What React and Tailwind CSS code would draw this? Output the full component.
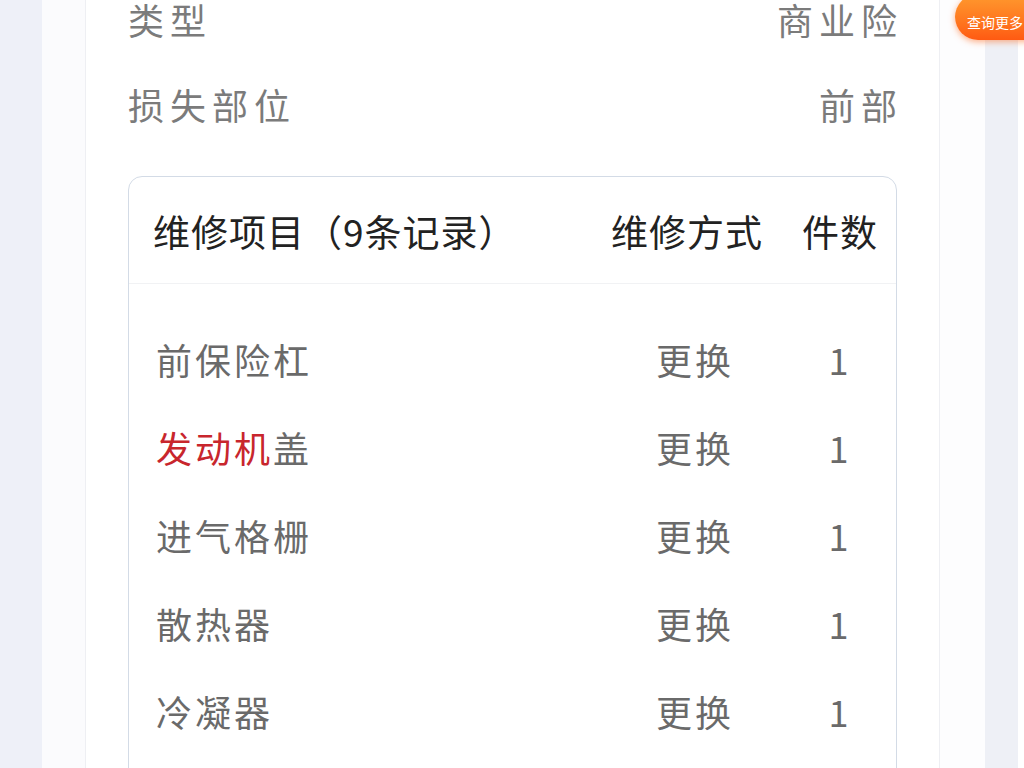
const rows = [
    { name: '前保险杠', way: '更换', count: 1 },
    { name: '发动机盖', red: 3, way: '更换', count: 1 },
    { name: '进气格栅', way: '更换', count: 1 },
    { name: '散热器', way: '更换', count: 1 },
    { name: '冷凝器', way: '更换', count: 1 },
    { name: '左前大灯总成', way: '更换', count: 1 },
    { name: '右前大灯总成', way: '更换', count: 1 },
];

const font = { fontFamily: '"Noto Sans CJK SC", "Noto Sans", sans-serif' };

function InfoRow({ label, value }) {
    return (
        <div className="h-[85px] flex items-center justify-between text-[36px] text-[#7b7b7b] tracking-[6px]">
            <span>{label}</span>
            <span className="-mr-[6px]">{value}</span>
        </div>
    );
}

export default function App() {
    return (
        <div style={font} className="relative h-[768px] w-[1024px] overflow-hidden flex bg-white">
            <div className="w-[42px] bg-[#eef0f8]" />
            <div className="w-[43px] bg-[#fbfbfd]" />

            <div className="w-[855px] bg-white border-l border-r border-[#eeeff3] px-[42px]">
                <div className="-mt-[24px]">
                    <InfoRow label="类型" value="商业险" />
                    <InfoRow label="损失部位" value="前部" />
                </div>

                <div className="mt-[30px] border border-[#d3dbe6] rounded-[14px] bg-white">
                    <div className="h-[107px] flex items-center pt-[4px] text-[37px] text-[#222] tracking-[1px] border-b border-[#f1f2f4] whitespace-nowrap">
                        <div className="flex-1 pl-[24px]">维修项目（9条记录）</div>
                        <div className="w-[150px] mr-[28px] flex justify-center">维修方式</div>
                        <div className="w-[100px] mr-[6px] flex justify-center">件数</div>
                    </div>
                    <div className="pt-[31px]">
                        {rows.map((r, i) => (
                            <div key={i} className="h-[88px] flex items-center text-[36px] text-[#6a6a6a] tracking-[3px] whitespace-nowrap">
                                <div className="flex-1 pl-[27px]">
                                    {r.red ? (
                                        <>
                                            <span className="text-[#c8262d]">{r.name.slice(0, r.red)}</span>
                                            {r.name.slice(r.red)}
                                        </>
                                    ) : r.name}
                                </div>
                                <div className="w-[150px] mr-[20px] text-center">{r.way}</div>
                                <div className="w-[100px] mr-[6px] text-center">{r.count}</div>
                            </div>
                        ))}
                    </div>
                </div>
            </div>

            <div className="w-[45px] bg-[#fdfdfe]" />
            <div className="w-[33px] bg-[#eef0f6]" />
            <div className="w-[6px] bg-white" />

            <div className="absolute left-[955px] -top-[6px] w-[100px] h-[46px] rounded-full bg-gradient-to-b from-[#ff9a2e] to-[#ff5a12] shadow-[0_2px_6px_rgba(255,100,20,0.5)] flex items-center pl-[12px] pt-[10px] overflow-hidden">
                <span className="text-[14px] text-white whitespace-nowrap">查询更多</span>
            </div>
        </div>
    );
}
